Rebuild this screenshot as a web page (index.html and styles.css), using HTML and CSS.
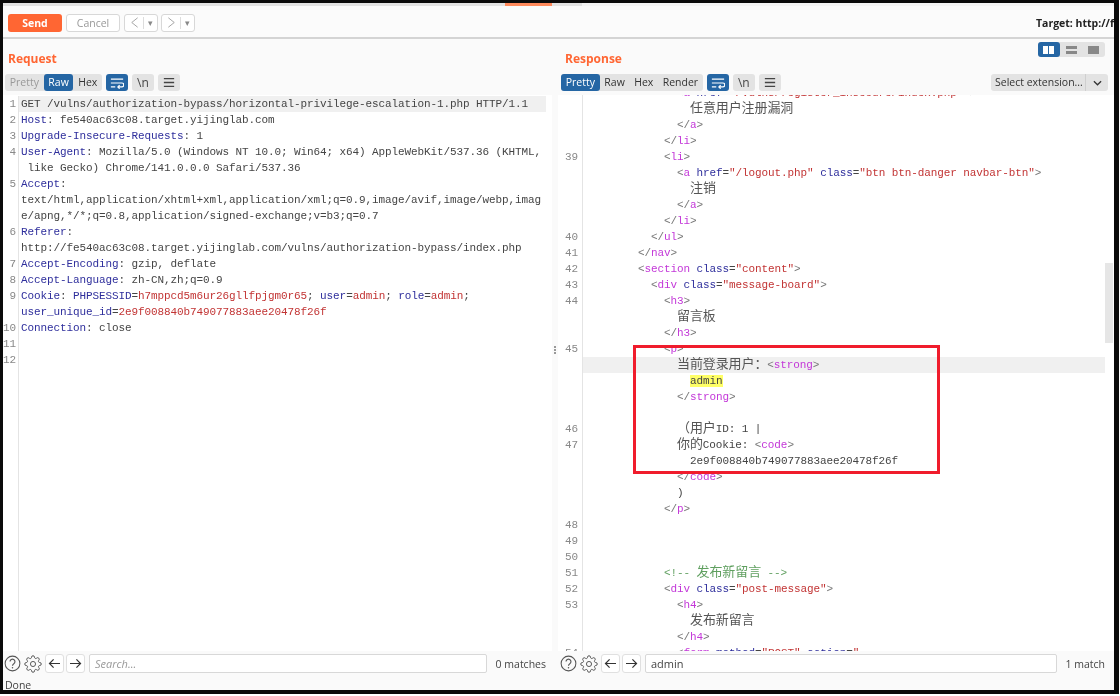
FILE: index.html
```html
<!DOCTYPE html>
<html lang="en">
<head>
    <meta charset="UTF-8">
    <title>Repeater</title>
    <link rel="stylesheet" href="styles.css">
</head>
<body>
    <svg class="defs" width="0" height="0">
        <symbol id="i-wrap" viewBox="0 0 16 12"><path d="M1 1.5h14M1 6h12.5a2.2 2.2 0 0 1 0 4.5H9M11 8.5l-2 2 2 2M1 10.5h5" fill="none" stroke="currentColor" stroke-width="1.4"/></symbol>
        <symbol id="i-menu" viewBox="0 0 14 12"><path d="M1 1.5h12M1 6h12M1 10.5h12" fill="none" stroke="currentColor" stroke-width="1.5"/></symbol>
        <symbol id="i-help" viewBox="0 0 18 18"><circle cx="9" cy="9" r="7.8" fill="none" stroke="currentColor" stroke-width="1.1"/><path d="M6.4 7a2.6 2.6 0 1 1 4 2.2c-1 .7-1.4 1.1-1.4 2.3" fill="none" stroke="currentColor" stroke-width="1.2"/><circle cx="9" cy="13.6" r=".8" fill="currentColor"/></symbol>
        <symbol id="i-gear" viewBox="0 0 24 24"><circle cx="12" cy="12" r="3.4" fill="none" stroke="currentColor" stroke-width="1.3"/><path fill="none" stroke="currentColor" stroke-width="1.3" d="M19.4 15a1.65 1.65 0 0 0 .33 1.82l.06.06a2 2 0 0 1 0 2.83 2 2 0 0 1-2.83 0l-.06-.06a1.65 1.65 0 0 0-1.82-.33 1.65 1.65 0 0 0-1 1.51V21a2 2 0 0 1-2 2 2 2 0 0 1-2-2v-.09A1.65 1.65 0 0 0 9 19.4a1.65 1.65 0 0 0-1.82.33l-.06.06a2 2 0 0 1-2.83 0 2 2 0 0 1 0-2.83l.06-.06a1.65 1.65 0 0 0 .33-1.82 1.65 1.65 0 0 0-1.51-1H3a2 2 0 0 1-2-2 2 2 0 0 1 2-2h.09A1.65 1.65 0 0 0 4.6 9a1.65 1.65 0 0 0-.33-1.82l-.06-.06a2 2 0 0 1 0-2.83 2 2 0 0 1 2.83 0l.06.06a1.65 1.65 0 0 0 1.82.33H9a1.65 1.65 0 0 0 1-1.51V3a2 2 0 0 1 2-2 2 2 0 0 1 2 2v.09a1.65 1.65 0 0 0 1 1.51 1.65 1.65 0 0 0 1.82-.33l.06-.06a2 2 0 0 1 2.83 0 2 2 0 0 1 0 2.83l-.06.06a1.65 1.65 0 0 0-.33 1.82V9a1.65 1.65 0 0 0 1.51 1H21a2 2 0 0 1 2 2 2 2 0 0 1-2 2h-.09a1.65 1.65 0 0 0-1.51 1z"/></symbol>
        <symbol id="i-left" viewBox="0 0 14 12"><path d="M13 6H1.5M6 1.5L1.5 6 6 10.5" fill="none" stroke="currentColor" stroke-width="1.3"/></symbol>
        <symbol id="i-right" viewBox="0 0 14 12"><path d="M1 6h11.5M8 1.5L12.5 6 8 10.5" fill="none" stroke="currentColor" stroke-width="1.3"/></symbol>
        <symbol id="i-chev" viewBox="0 0 10 6"><path d="M1 1l4 4 4-4" fill="none" stroke="currentColor" stroke-width="1.4"/></symbol>
        <symbol id="i-back" viewBox="0 0 10 14"><path d="M9 1L1.5 7 9 13" fill="none" stroke="currentColor" stroke-width="1.1"/></symbol>
        <symbol id="i-next" viewBox="0 0 10 14"><path d="M1 1l7.5 6L1 13" fill="none" stroke="currentColor" stroke-width="1.1"/></symbol>
    </svg>

    <div class="frame">
        <div class="tab-strip"><span class="tab-active"></span></div>

        <div class="toolbar">
            <button class="btn-send">Send</button>
            <button class="btn-cancel">Cancel</button>
            <div class="btn-nav">
                <svg class="nav-arrow"><use href="#i-back"/></svg>
                <span class="nav-drop">▾</span>
            </div>
            <div class="btn-nav">
                <svg class="nav-arrow"><use href="#i-next"/></svg>
                <span class="nav-drop">▾</span>
            </div>
            <div class="target">Target: http://f</div>
        </div>

        <div class="panels">
            <!-- Request -->
            <div class="panel panel-request">
                <div class="panel-head">
                    <h2>Request</h2>
                </div>
                <div class="tabs-row">
                    <div class="tabs">
                        <span class="tab tab-muted">Pretty</span>
                        <span class="tab tab-on">Raw</span>
                        <span class="tab">Hex</span>
                    </div>
                    <span class="tool tool-on"><svg class="ico-wrap"><use href="#i-wrap"/></svg></span>
                    <span class="tool">\n</span>
                    <span class="tool"><svg class="ico-menu"><use href="#i-menu"/></svg></span>
                </div>
                <div class="editor">
                    <div class="nums">
                        <div>1</div><div>2</div><div>3</div><div>4</div><div>&nbsp;</div><div>5</div><div>&nbsp;</div><div>&nbsp;</div><div>6</div><div>&nbsp;</div><div>7</div><div>8</div><div>9</div><div>&nbsp;</div><div>10</div><div>11</div><div>12</div>
                    </div>
                    <div class="lines">
                        <div class="current">GET /vulns/authorization-bypass/horizontal-privilege-escalation-1.php HTTP/1.1</div>
                        <div><b>Host</b>: fe540ac63c08.target.yijinglab.com</div>
                        <div><b>Upgrade-Insecure-Requests</b>: 1</div>
                        <div><b>User-Agent</b>: Mozilla/5.0 (Windows NT 10.0; Win64; x64) AppleWebKit/537.36 (KHTML,</div>
                        <div> like Gecko) Chrome/141.0.0.0 Safari/537.36</div>
                        <div><b>Accept</b>:</div>
                        <div>text/html,application/xhtml+xml,application/xml;q=0.9,image/avif,image/webp,imag</div>
                        <div>e/apng,*/*;q=0.8,application/signed-exchange;v=b3;q=0.7</div>
                        <div><b>Referer</b>:</div>
                        <div>http://fe540ac63c08.target.yijinglab.com/vulns/authorization-bypass/index.php</div>
                        <div><b>Accept-Encoding</b>: gzip, deflate</div>
                        <div><b>Accept-Language</b>: zh-CN,zh;q=0.9</div>
                        <div><b>Cookie</b>: <b>PHPSESSID</b>=<i>h7mppcd5m6ur26gllfpjgm0r65</i>; <b>user</b>=<i>admin</i>; <b>role</b>=<i>admin</i>;</div>
                        <div><b>user_unique_id</b>=<i>2e9f008840b749077883aee20478f26f</i></div>
                        <div><b>Connection</b>: close</div>
                        <div>&nbsp;</div>
                        <div>&nbsp;</div>
                    </div>
                </div>
                <div class="search">
                    <svg class="ico-help"><use href="#i-help"/></svg>
                    <svg class="ico-gear"><use href="#i-gear"/></svg>
                    <span class="arrow"><svg><use href="#i-left"/></svg></span>
                    <span class="arrow"><svg><use href="#i-right"/></svg></span>
                    <div class="search-box search-empty">Search...</div>
                    <span class="matches">0 matches</span>
                </div>
            </div>

            <div class="splitter"><span></span><span></span><span></span></div>

            <!-- Response -->
            <div class="panel panel-response">
                <div class="panel-head">
                    <h2>Response</h2>
                    <div class="layout-btns">
                        <span class="layout-btn layout-on"><i class="cols"></i></span>
                        <span class="layout-btn"><i class="rows"></i></span>
                        <span class="layout-btn"><i class="single"></i></span>
                    </div>
                </div>
                <div class="tabs-row">
                    <div class="tabs">
                        <span class="tab tab-on">Pretty</span>
                        <span class="tab">Raw</span>
                        <span class="tab">Hex</span>
                        <span class="tab">Render</span>
                    </div>
                    <span class="tool tool-on"><svg class="ico-wrap"><use href="#i-wrap"/></svg></span>
                    <span class="tool">\n</span>
                    <span class="tool"><svg class="ico-menu"><use href="#i-menu"/></svg></span>
                    <div class="select-ext">
                        <span class="select-label">Select extension...</span>
                        <span class="select-arrow"><svg><use href="#i-chev"/></svg></span>
                    </div>
                </div>
                <div class="editor editor-response">
                    <div class="nums">
                        <div>&nbsp;</div><div>&nbsp;</div><div>&nbsp;</div><div>&nbsp;</div><div>39</div><div>&nbsp;</div><div>&nbsp;</div><div>&nbsp;</div><div>&nbsp;</div><div>40</div><div>41</div><div>42</div><div>43</div><div>44</div><div>&nbsp;</div><div>&nbsp;</div><div>45</div><div>&nbsp;</div><div>&nbsp;</div><div>&nbsp;</div><div>&nbsp;</div><div>46</div><div>47</div><div>&nbsp;</div><div>&nbsp;</div><div>&nbsp;</div><div>&nbsp;</div><div>48</div><div>49</div><div>50</div><div>51</div><div>52</div><div>53</div><div>&nbsp;</div><div>&nbsp;</div><div>54</div>
                    </div>
                    <div class="lines">
                        <div>            <s>&lt;</s><u>a</u> <b>href</b>=<i>"/vulns/register_insecure/index.php"</i> <s>&gt;</s></div>
                        <div>              <em>任意用户注册漏洞</em></div>
                        <div>            <s>&lt;/</s><u>a</u><s>&gt;</s></div>
                        <div>          <s>&lt;/</s><u>li</u><s>&gt;</s></div>
                        <div>          <s>&lt;</s><u>li</u><s>&gt;</s></div>
                        <div>            <s>&lt;</s><u>a</u> <b>href</b>=<i>"/logout.php"</i> <b>class</b>=<i>"btn btn-danger navbar-btn"</i><s>&gt;</s></div>
                        <div>              <em>注销</em></div>
                        <div>            <s>&lt;/</s><u>a</u><s>&gt;</s></div>
                        <div>          <s>&lt;/</s><u>li</u><s>&gt;</s></div>
                        <div>        <s>&lt;/</s><u>ul</u><s>&gt;</s></div>
                        <div>      <s>&lt;/</s><u>nav</u><s>&gt;</s></div>
                        <div>      <s>&lt;</s><u>section</u> <b>class</b>=<i>"content"</i><s>&gt;</s></div>
                        <div>        <s>&lt;</s><u>div</u> <b>class</b>=<i>"message-board"</i><s>&gt;</s></div>
                        <div>          <s>&lt;</s><u>h3</u><s>&gt;</s></div>
                        <div>            <em>留言板</em></div>
                        <div>          <s>&lt;/</s><u>h3</u><s>&gt;</s></div>
                        <div>          <s>&lt;</s><u>p</u><s>&gt;</s></div>
                        <div class="current">            <em>当前登录用户：</em><s>&lt;</s><u>strong</u><s>&gt;</s></div>
                        <div>              <mark>admin</mark></div>
                        <div>            <s>&lt;/</s><u>strong</u><s>&gt;</s></div>
                        <div>&nbsp;</div>
                        <div>            <em>（用户</em>ID: 1 |</div>
                        <div>            <em>你的</em>Cookie: <s>&lt;</s><u>code</u><s>&gt;</s></div>
                        <div>              2e9f008840b749077883aee20478f26f</div>
                        <div>            <s>&lt;/</s><u>code</u><s>&gt;</s></div>
                        <div>            )</div>
                        <div>          <s>&lt;/</s><u>p</u><s>&gt;</s></div>
                        <div>&nbsp;</div>
                        <div>&nbsp;</div>
                        <div>&nbsp;</div>
                        <div>          <span class="comment">&lt;!-- <em>发布新留言</em> --&gt;</span></div>
                        <div>          <s>&lt;</s><u>div</u> <b>class</b>=<i>"post-message"</i><s>&gt;</s></div>
                        <div>            <s>&lt;</s><u>h4</u><s>&gt;</s></div>
                        <div>              <em>发布新留言</em></div>
                        <div>            <s>&lt;/</s><u>h4</u><s>&gt;</s></div>
                        <div>            <s>&lt;</s><u>form</u> <b>method</b>=<i>"POST"</i> <b>action</b>=<i>"</i></div>
                    </div>
                    <div class="scrollbar"><span></span></div>
                    <div class="callout"></div>
                </div>
                <div class="search">
                    <svg class="ico-help"><use href="#i-help"/></svg>
                    <svg class="ico-gear"><use href="#i-gear"/></svg>
                    <span class="arrow"><svg><use href="#i-left"/></svg></span>
                    <span class="arrow"><svg><use href="#i-right"/></svg></span>
                    <div class="search-box">admin</div>
                    <span class="matches">1 match</span>
                </div>
            </div>
        </div>

        <div class="status">Done</div>
    </div>
</body>
</html>
```

FILE: styles.css
```css
* {
    box-sizing: border-box;
}

body {
    margin: 0;
    background-color: #fff;
    font-family: "Open Sans", "Noto Sans", Arial, sans-serif;
    color: #333;
}

.defs {
    display: block;
    height: 0;
}

.frame {
    width: 1119px;
    height: 694px;
    border-style: solid;
    border-color: #0a0a0a;
    border-width: 3px 5px 4px 3px;
    background-color: #fafafa;
    display: flex;
    flex-direction: column;
    overflow: hidden;
    filter: blur(0.4px);
}

.tab-strip {
    height: 3px;
    flex-shrink: 0;
    background: linear-gradient(to right, #e2e2e2 579px, #f4f4f4 579px);
    padding-left: 502px;
}

.tab-active {
    display: block;
    width: 47px;
    height: 3px;
    background-color: #ff8a5c;
}

.toolbar {
    height: 33px;
    flex-shrink: 0;
    display: flex;
    align-items: center;
    padding: 2px 0 0 5px;
    border-bottom: 2px solid #d4d4d4;
    background-color: #fbfbfb;
}

.toolbar button {
    height: 18px;
    border-radius: 3px;
    font-family: inherit;
    font-size: 10.5px;
    padding: 0;
}

.btn-send {
    width: 54px;
    border: none;
    background-color: #ff6633;
    color: #fff;
    font-weight: 700;
}

.btn-cancel {
    width: 54px;
    margin-left: 4px;
    margin-right: 4px;
    border: 1px solid #d8d8d8;
    background-color: #fff;
    color: #999;
}

.btn-nav {
    width: 34px;
    height: 18px;
    margin-right: 3px;
    padding-left: 5px;
    display: flex;
    align-items: center;
    border: 1px solid #d8d8d8;
    border-radius: 3px;
    background-color: #fff;
    color: #999;
}

.nav-arrow {
    width: 9px;
    height: 11px;
}

.nav-drop {
    margin-left: 4px;
    padding-left: 4px;
    border-left: 1px solid #ddd;
    font-size: 9px;
    line-height: 12px;
    color: #888;
}

.target {
    margin-left: auto;
    white-space: nowrap;
    font-size: 10.5px;
    font-weight: 700;
    color: #222;
}

.panels {
    flex: 1;
    min-height: 0;
    display: flex;
}

.panel {
    display: flex;
    flex-direction: column;
    min-width: 0;
}

.panel-request {
    width: 549px;
}

.panel-response {
    flex: 1;
}

.splitter {
    width: 6px;
    display: flex;
    flex-direction: column;
    justify-content: center;
    align-items: center;
    gap: 1px;
    padding-bottom: 16px;
}

.splitter span {
    width: 2px;
    height: 2px;
    background-color: #999;
}

.panel-head {
    height: 35px;
    flex-shrink: 0;
    display: flex;
    justify-content: space-between;
    padding: 12px 9px 0 5px;
}

.panel-response .panel-head {
    padding-left: 7px;
}

.panel-head h2 {
    margin: 0;
    font-size: 12px;
    line-height: 16px;
    font-weight: 700;
    color: #ff6633;
}

.layout-btns {
    display: flex;
    height: 15px;
    margin-top: -9px;
    border-radius: 3px;
    background-color: #e3e3e3;
}

.layout-btn {
    width: 22.5px;
    height: 15px;
    display: flex;
    align-items: center;
    justify-content: center;
    border-radius: 3px;
}

.layout-on {
    background-color: #2566a4;
}

.layout-btn i {
    display: block;
    width: 11px;
    height: 8px;
}

.layout-btn .cols {
    background: linear-gradient(to right, #fff 45%, transparent 45%, transparent 55%, #fff 55%);
}

.layout-btn .rows {
    background: linear-gradient(to bottom, #888 40%, transparent 40%, transparent 60%, #888 60%);
}

.layout-btn .single {
    background-color: #888;
}

.tabs-row {
    height: 21px;
    flex-shrink: 0;
    display: flex;
    align-items: flex-start;
    padding-left: 2px;
    gap: 4px;
    background-color: #fafafa;
}

.panel-response .tabs-row {
    padding-left: 3px;
    position: relative;
    z-index: 1;
}

.tabs {
    display: flex;
    height: 17px;
    border-radius: 3px;
    background-color: #e3e3e3;
}

.tab {
    display: block;
    padding: 0 4.7px;
    font-size: 10.5px;
    line-height: 17px;
    border-radius: 3px;
    color: #333;
}

.tab-muted {
    color: #999;
}

.tab-on {
    background-color: #2566a4;
    color: #fff;
}

.tool {
    width: 22px;
    height: 17px;
    display: flex;
    align-items: center;
    justify-content: center;
    border-radius: 3px;
    background-color: #e3e3e3;
    font-size: 12px;
    color: #444;
}

.tool-on {
    background-color: #2566a4;
    color: #fff;
}

.ico-wrap {
    width: 14px;
    height: 12px;
}

.ico-menu {
    width: 12px;
    height: 11px;
}

.select-ext {
    margin-left: auto;
    margin-right: 6px;
    width: 117px;
    height: 17px;
    display: flex;
    border-radius: 3px;
    background-color: #e3e3e3;
    font-size: 10.5px;
    line-height: 17px;
    color: #333;
}

.select-label {
    flex: 1;
    padding-left: 4px;
    white-space: nowrap;
    overflow: hidden;
}

.select-arrow {
    width: 23px;
    display: flex;
    align-items: center;
    justify-content: center;
    border-left: 1px solid #cfcfcf;
}

.select-arrow svg {
    width: 9px;
    height: 6px;
}

.editor {
    flex: 1;
    min-height: 0;
    position: relative;
    display: flex;
    overflow: hidden;
    padding-top: 1px;
    background-color: #fff;
    font-family: "Liberation Mono", "Noto Sans CJK SC", monospace;
    font-size: 11px;
    letter-spacing: -0.1px;
    line-height: 16px;
    color: #444;
}

.editor-response {
    padding-top: 0;
}

.nums {
    width: 16px;
    flex-shrink: 0;
    height: 700px;
    padding-right: 2px;
    text-align: right;
    border-right: 1px solid #e4e4e4;
    color: #888;
}

.panel-response .nums {
    width: 25px;
    padding-right: 4px;
    margin-top: -10px;
}

.lines {
    flex: 1;
    min-width: 0;
}

.panel-response .lines {
    margin-top: -10px;
}

.lines div {
    height: 16px;
    padding-left: 2px;
    white-space: pre;
}

.panel-response .lines div {
    padding-left: 16px;
}

.panel-request .lines {
    margin-right: 6px;
}

.current {
    background-color: #f0f0f0;
}

/* syntax colours */
.lines b {
    font-weight: 400;
    color: #2e2e9c;
}

.lines i {
    font-style: normal;
    color: #c23434;
}

.lines s {
    text-decoration: none;
    color: #777;
}

.lines u {
    text-decoration: none;
    color: #c337d8;
}

.lines em {
    font-style: normal;
    font-size: 13px;
    color: #555;
}

.lines mark {
    background-color: #ffff66;
    color: #444;
}

.comment {
    color: #5f9f5f;
}

.lines .comment em {
    color: #5f9f5f;
}

.scrollbar {
    width: 8px;
    margin-right: 1px;
    flex-shrink: 0;
}

.scrollbar span {
    display: block;
    height: 80px;
    margin-top: 168px;
    background-color: #e6e6e6;
}

.callout {
    position: absolute;
    left: 75px;
    top: 250px;
    width: 307px;
    height: 129px;
    border: 3px solid #f01c2c;
}

.search {
    height: 25px;
    flex-shrink: 0;
    display: flex;
    align-items: center;
    padding: 0 6px 0 1px;
    background-color: #fafafa;
}

.panel-response .search {
    padding: 0 9px 0 2px;
}

.ico-help {
    width: 17px;
    height: 17px;
    color: #555;
}

.ico-gear {
    width: 18px;
    height: 18px;
    margin-left: 3px;
    color: #555;
}

.arrow {
    width: 19px;
    height: 19px;
    margin-left: 3px;
    display: flex;
    align-items: center;
    justify-content: center;
    border: 1px solid #e0e0e0;
    border-radius: 3px;
    background-color: #fff;
    color: #333;
}

.arrow + .arrow {
    margin-left: 2px;
}

.arrow svg {
    width: 13px;
    height: 11px;
}

.search-box {
    flex: 1;
    height: 19px;
    margin-left: 4px;
    padding-left: 5px;
    border: 1px solid #d8d8d8;
    border-radius: 2px;
    background-color: #fff;
    font-size: 11px;
    line-height: 17px;
    color: #444;
}

.search-empty {
    font-style: italic;
    color: #999;
}

.matches {
    margin-left: 9px;
    font-size: 10.5px;
    color: #444;
}

.status {
    height: 14px;
    flex-shrink: 0;
    padding: 2px 0 0 2px;
    background-color: #fafafa;
    font-size: 10.5px;
    line-height: 14px;
    color: #444;
}
```
